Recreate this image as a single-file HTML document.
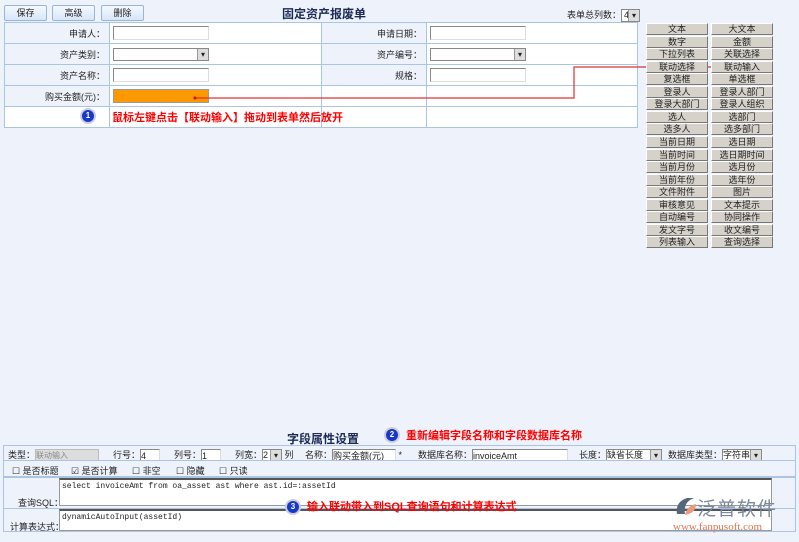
<!DOCTYPE html>
<html><head><meta charset="utf-8"><style>
*{margin:0;padding:0;box-sizing:border-box}
body{width:799px;height:542px;background:#eef3fb;font-family:"Liberation Sans","Noto Sans CJK SC",sans-serif;font-size:9px;color:#222;position:relative;overflow:hidden}
.a{position:absolute}
.btn{position:absolute;top:5px;height:16px;width:43px;background:linear-gradient(#f4f8fe,#d8e6f8);border:1px solid #9ab4d8;border-radius:2px;text-align:center;line-height:14px;font-size:9px}
table{border-collapse:collapse}
.ft td{border:1px solid #a9c4e4;height:21px;background:#fff}
.ft td.l{background:#eef3fb;text-align:right;padding-right:4px;width:105px}
.inp{display:inline-block;height:14px;border:1px solid #888;border-right-color:#ddd;border-bottom-color:#ddd;background:#fff;vertical-align:middle}
.sel{display:inline-block;height:13px;border:1px solid #888;background:#fff;position:relative;vertical-align:middle}
.sel:after{content:"▾";position:absolute;right:0;top:0;width:10px;height:11px;background:#ddd;border-left:1px solid #999;font-size:8px;line-height:11px;text-align:center}
.g{position:absolute;width:62px;height:12px;background:#d6d2ca;border:1px solid #fff;border-right-color:#777;border-bottom-color:#777;text-align:center;font-size:9px;line-height:10px}
.red{color:#f00;font-weight:bold;font-size:11px}
.num{position:absolute;width:12px;height:12px;border-radius:50%;background:#1838c8;color:#fff;font-size:8px;text-align:center;line-height:12px;box-shadow:0 0 0 2px #ccd;font-weight:bold}
.p{position:absolute;border:1px solid #a9c4e4;background:#eef3fb}
.mono{font-family:"Liberation Mono",monospace;font-size:8px}
</style></head><body>
<div class="btn" style="left:4px">保存</div>
<div class="btn" style="left:52px">高级</div>
<div class="btn" style="left:101px">删除</div>
<div class="a" style="left:282px;top:5px;font-size:12px;font-weight:bold;color:#1a2a55">固定资产报废单</div>
<div class="a" style="left:567px;top:8px">表单总列数：<span class="sel" style="width:19px;font-size:9px;line-height:11px;padding-left:2px">4</span></div>
<table class="ft a" style="left:4px;top:22px;width:634px">
<tr><td class="l">申请人：</td><td style="width:212px;padding-left:3px"><span class="inp" style="width:96px"></span></td><td class="l">申请日期：</td><td style="padding-left:3px"><span class="inp" style="width:96px"></span></td></tr>
<tr><td class="l">资产类别：</td><td style="padding-left:3px"><span class="sel" style="width:96px"></span></td><td class="l">资产编号：</td><td style="padding-left:3px"><span class="sel" style="width:96px"></span></td></tr>
<tr><td class="l">资产名称：</td><td style="padding-left:3px"><span class="inp" style="width:96px"></span></td><td class="l">规格：</td><td style="padding-left:3px"><span class="inp" style="width:96px"></span></td></tr>
<tr><td class="l">购买金额(元)：</td><td style="padding-left:3px"><span class="inp" style="width:96px;background:#f90;border-color:#999"></span></td><td class="l" style="background:#fff"></td><td></td></tr>
<tr><td style="background:#fff"></td><td></td><td></td><td></td></tr>
</table>
<div class="num" style="left:82px;top:110px">1</div>
<div class="a red" style="left:112px;top:109px">鼠标左键点击【联动输入】拖动到表单然后放开</div>
<svg class="a" style="left:0;top:0" width="799" height="542"><polyline points="195,98 574,98 574,67 719,67" fill="none" stroke="#d33" stroke-width="1.2"/><circle cx="195" cy="98" r="1.5" fill="#d00"/><circle cx="719" cy="67" r="2" fill="#d00"/></svg>
<div id="grid"></div>
<script>
var L=["文本","数字","下拉列表","联动选择","复选框","登录人","登录大部门","选人","选多人","当前日期","当前时间","当前月份","当前年份","文件附件","审核意见","自动编号","发文字号","列表输入"];
var R=["大文本","金额","关联选择","联动输入","单选框","登录人部门","登录人组织","选部门","选多部门","选日期","选日期时间","选月份","选年份","图片","文本提示","协同操作","收文编号","查询选择"];
var h="";for(var i=0;i<18;i++){var t=23+i*12.55;h+='<div class="g" style="left:646px;top:'+t+'px">'+L[i]+'</div><div class="g" style="left:711px;top:'+t+'px">'+R[i]+'</div>';}
document.getElementById("grid").innerHTML=h;
</script>
<div class="a" style="left:287px;top:430px;font-size:12px;font-weight:bold;color:#1a2a55">字段属性设置</div>
<div class="num" style="left:386px;top:429px">2</div>
<div class="a red" style="left:406px;top:427px">重新编辑字段名称和字段数据库名称</div>
<div class="p" style="left:3px;top:445px;width:793px;height:16px"></div>
<div class="a" style="left:8px;top:448px">类型：<span class="inp" style="width:64px;background:#ddd;color:#888;border-color:#bbb;font-size:8px;line-height:12px">联动输入</span></div>
<div class="a" style="left:113px;top:448px">行号：<span class="inp" style="width:20px;line-height:12px">4</span></div>
<div class="a" style="left:174px;top:448px">列号：<span class="inp" style="width:20px;line-height:12px">1</span></div>
<div class="a" style="left:235px;top:448px">列宽：<span class="sel" style="width:20px;line-height:11px">2</span> 列</div>
<div class="a" style="left:305px;top:448px">名称：<span class="inp" style="width:64px;line-height:12px">购买金额(元)</span> *</div>
<div class="a" style="left:418px;top:448px">数据库名称：<span class="inp" style="width:96px;line-height:12px">invoiceAmt</span></div>
<div class="a" style="left:579px;top:448px">长度：<span class="sel" style="width:56px;line-height:11px">缺省长度</span></div>
<div class="a" style="left:668px;top:448px">数据库类型：<span class="sel" style="width:40px;line-height:11px">字符串</span></div>
<div class="p" style="left:3px;top:460px;width:793px;height:17px"></div>
<div class="a" style="left:12px;top:464px">☐ 是否标题</div>
<div class="a" style="left:71px;top:464px">☑ 是否计算</div>
<div class="a" style="left:132px;top:464px">☐ 非空</div>
<div class="a" style="left:176px;top:464px">☐ 隐藏</div>
<div class="a" style="left:219px;top:464px">☐ 只读</div>
<div class="p" style="left:3px;top:477px;width:793px;height:32px"></div>
<div class="a" style="left:18px;top:496px">查询SQL：</div>
<div class="a mono" style="left:59px;top:478px;width:713px;height:28px;background:#fff;border:1px solid #999;border-top:2px solid #555;padding:2px">select invoiceAmt from oa_asset ast where ast.id=:assetId</div>
<div class="p" style="left:3px;top:508px;width:793px;height:24px"></div>
<div class="a" style="left:10px;top:520px">计算表达式：</div>
<div class="a mono" style="left:59px;top:509px;width:713px;height:22px;background:#fff;border:1px solid #999;border-top:2px solid #555;padding:2px">dynamicAutoInput(assetId)</div>
<div class="num" style="left:287px;top:501px">3</div>
<div class="a red" style="left:307px;top:498px">输入联动带入到SQL查询语句和计算表达式</div>
<svg class="a" style="left:673px;top:494px" width="24" height="24"><path d="M4 20 Q2 8 14 4 L21 4 Q10 8 12 20Z" fill="#567"/><path d="M12 21 Q14 12 23 10 Q23 19 12 21Z" fill="#e97"/></svg>
<div class="a" style="left:697px;top:494px;font-size:19px;color:#7a8899;letter-spacing:1px">泛普软件</div>
<div class="a" style="left:673px;top:521px;font-family:'Liberation Serif',serif;font-size:11px;color:#d75">www.fanpusoft.com</div>
</body></html>
